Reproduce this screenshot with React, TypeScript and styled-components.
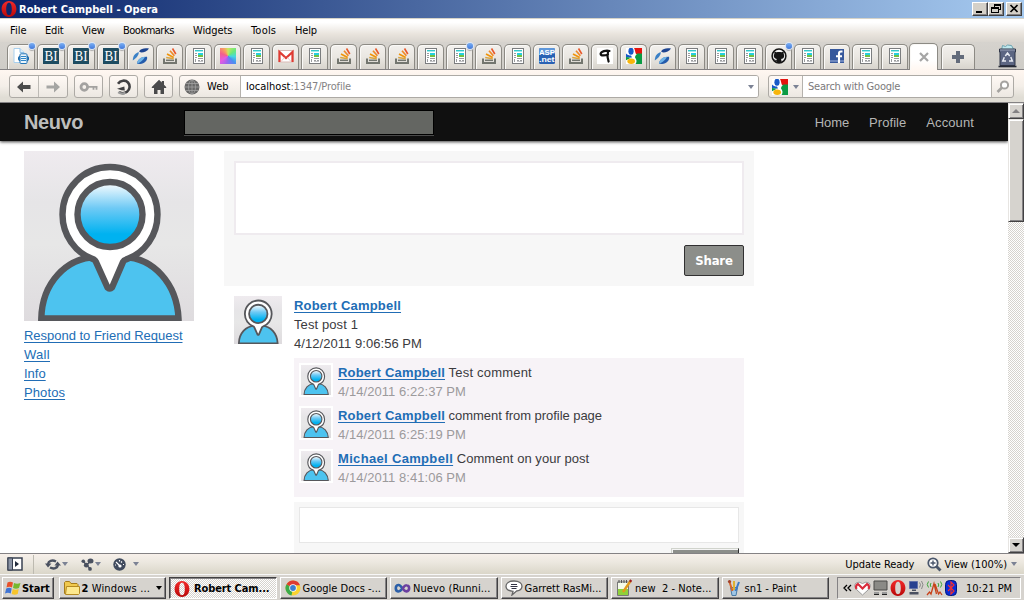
import React from "react";
import styled, { createGlobalStyle, css } from "styled-components";

const Global = createGlobalStyle`
  * { box-sizing: border-box; }
  html, body { margin: 0; padding: 0; overflow: hidden; }
  body { width: 1024px; height: 600px; background: #fff; }
  svg { display: block; flex: none; }
`;

const ui = '"DejaVu Sans Condensed", "DejaVu Sans", sans-serif';
const arial = '"Liberation Sans", Arial, sans-serif';

const Desktop = styled.div`
  width: 1024px;
  height: 600px;
  display: flex;
  flex-direction: column;
  overflow: hidden;
  font-family: ${ui};
  font-stretch: condensed;
  font-size: 11px;
  color: #000;
  white-space: nowrap;
`;

const Label = styled.span<{ $ls?: number; $color?: string; $ml?: number; $bold?: boolean }>`
  letter-spacing: ${(p) => p.$ls ?? 0}px;
  margin-left: ${(p) => p.$ml ?? 0}px;
  ${(p) => p.$color && `color: ${p.$color};`}
  font-weight: ${(p) => (p.$bold ? 700 : 400)};
  white-space: pre;
`;

/* ---------- window title ---------- */
const TitleBar = styled.header`
  height: 18px;
  flex: none;
  display: flex;
  align-items: center;
  padding: 0 2px 0 1px;
  background: linear-gradient(90deg, #0a246a, #a6caf0);
  color: #fff;
`;
const TitleButtons = styled.div`
  display: flex;
  margin-left: auto;
`;
const TitleButton = styled.div<{ $gap?: boolean }>`
  width: 16px;
  height: 14px;
  margin-left: ${(p) => (p.$gap ? 2 : 0)}px;
  background: #d4d0c8;
  border: 1px solid;
  border-color: #fff #404040 #404040 #fff;
  box-shadow: inset -1px -1px #848284;
`;

const MenuBar = styled.nav`
  height: 24px;
  flex: none;
  display: flex;
  align-items: center;
  padding-left: 10px;
  border-top: 1px solid #d6d3c8;
  background: linear-gradient(#fff, #fff 15%, #e9e4dd 65%, #d9d5cf);
`;
const MenuItem = styled.span<{ $w: number; $ls?: number }>`
  width: ${(p) => p.$w}px;
  letter-spacing: ${(p) => p.$ls ?? 0}px;
`;

/* ---------- tabs ---------- */
const TabStrip = styled.div`
  height: 28px;
  flex: none;
  display: flex;
  align-items: flex-end;
  gap: 2px;
  padding-left: 7px;
  background: linear-gradient(#d6d3ce, #ceccc7);
  border-bottom: 1px solid #848284;
`;
const Tab = styled.div<{ $w?: number }>`
  width: ${(p) => p.$w ?? 27}px;
  height: 25px;
  flex: none;
  position: relative;
  display: flex;
  justify-content: center;
  padding-top: 3px;
  border: 1px solid #8c8a84;
  border-bottom: 0;
  border-radius: 5px 5px 0 0;
  background: linear-gradient(#f2f0ed, #eae7e2 50%, #d8d4cd);
  box-shadow: inset 1px 1px #faf9f7;
`;
const ActiveTab = styled(Tab)`
  width: 29px;
  height: 27px;
  margin: 0 1px -1px -1px;
  background: linear-gradient(#fff, #fff 60%, #fff7f1);
  padding-top: 8px;
`;
const PlusTab = styled(Tab)`
  width: 34px;
  padding-top: 6px;
`;
const Dot = styled.i`
  position: absolute;
  right: -1px;
  top: -2px;
  width: 6px;
  height: 6px;
  border-radius: 50%;
  background: linear-gradient(#7bb0f5, #3f78dc);
  box-shadow: 0 0 0 1px #dce6f5, 0 2px 1px #aaa;
`;
const Trash = styled.div`
  margin: 0 7px 1px auto;
`;

/* ---------- toolbar ---------- */
const Toolbar = styled.div`
  height: 33px;
  flex: none;
  display: flex;
  align-items: flex-start;
  padding: 5px 10px 0 9px;
  background: linear-gradient(#fff7f1, #f4efe9 50%, #e0ddd5 85%);
  border-bottom: 1px solid #848284;
`;
const ToolGroup = styled.div<{ $w: number; $mr: number }>`
  width: ${(p) => p.$w}px;
  height: 23px;
  margin-right: ${(p) => p.$mr}px;
  flex: none;
  display: flex;
  border: 1px solid #adaaa5;
  border-radius: 3px;
  background: linear-gradient(#fff9f5, #ece8e2);
  overflow: hidden;
`;
const ToolCell = styled.div`
  flex: 1;
  display: flex;
  align-items: center;
  justify-content: center;
  & + & { border-left: 1px solid #bdbab5; }
`;
const SiteType = styled.div`
  width: 61px;
  display: flex;
  align-items: center;
  padding-left: 4px;
  border-right: 1px solid #b5b2ad;
`;
const Field = styled.div<{ $pl: number }>`
  flex: 1;
  display: flex;
  align-items: center;
  background: #fff;
  padding: 0 4px 0 ${(p) => p.$pl}px;
`;
const Chevron = styled.i<{ $ml?: string; $small?: boolean; $color?: string }>`
  width: 0;
  height: 0;
  flex: none;
  margin-left: ${(p) => p.$ml ?? "0"};
  border: ${(p) => (p.$small ? 3 : 3.5)}px solid transparent;
  border-top: 4px solid ${(p) => p.$color ?? "#7b8294"};
  border-bottom: 0;
`;
const Engine = styled.div`
  width: 34px;
  display: flex;
  align-items: center;
  padding-left: 3px;
  border-right: 1px solid #b5b2ad;
`;
const GoCell = styled.div`
  width: 22px;
  display: flex;
  align-items: center;
  justify-content: center;
  border-left: 1px solid #b5b2ad;
`;

/* ---------- page viewport ---------- */
const Viewport = styled.div`
  height: 450px;
  flex: none;
  display: flex;
  overflow: hidden;
`;
const Page = styled.div`
  width: 1008px;
  height: 450px;
  overflow: hidden;
  font-family: ${arial};
  font-size: 13px;
  font-stretch: normal;
  color: #3b3b3e;
  line-height: 19px;
`;
const SiteHeader = styled.header`
  height: 38px;
  display: flex;
  align-items: center;
  padding: 0 34px 0 24px;
  background: #101010;
  box-shadow: 0 1px 3px rgba(0, 0, 0, 0.75);
  position: relative;
`;
const Brand = styled.h1`
  margin: 0;
  width: 160px;
  font: 700 20px/24px ${arial};
  letter-spacing: -0.4px;
  color: #bdbebd;
`;
const SiteSearch = styled.div`
  width: 250px;
  height: 25px;
  margin-top: 1px;
  border: 1px solid #000;
  background: #646662;
  box-shadow: 0 1px #4a4a4a;
`;
const SiteNav = styled.nav`
  margin-left: auto;
  display: flex;
  gap: 20px;
  color: #b5b6b5;
  padding-top: 1px;
`;
const Columns = styled.div`
  display: flex;
  gap: 30px;
  padding: 10px 0 0 24px;
`;
const Sidebar = styled.aside`
  width: 170px;
  display: flex;
  flex-direction: column;
  align-items: flex-start;
`;
const SideLinks = styled.div`
  display: flex;
  flex-direction: column;
  align-items: flex-start;
  padding-top: 5px;
`;
const Link = styled.a<{ $bold?: boolean; $ls?: number }>`
  color: #216db5;
  text-decoration: underline;
  text-underline-offset: 2px;
  text-decoration-thickness: 1px;
  text-decoration-skip-ink: none;
  letter-spacing: ${(p) => p.$ls ?? 0}px;
  font-weight: ${(p) => (p.$bold ? 700 : 400)};
`;
const Feed = styled.main`
  width: 530px;
`;
const Composer = styled.section`
  height: 135px;
  padding: 10px;
  display: flex;
  flex-direction: column;
  align-items: flex-end;
  gap: 10px;
  background: #f7f7f7;
`;
const ComposerInput = styled.div`
  width: 510px;
  height: 74px;
  background: #fff;
  border: 2px solid #efebef;
`;
const ShareButton = styled.button`
  width: 60px;
  height: 31px;
  padding: 0;
  border: 1px solid #313031;
  border-radius: 2px;
  background: #8c8e8a;
  color: #fff;
  font: 700 13px/28px ${ui};
  font-stretch: condensed;
  letter-spacing: -0.2px;
`;
const Post = styled.article`
  display: flex;
  gap: 12px;
  padding: 10px 10px 0;
`;
const PostBody = styled.div`
  width: 450px;
  display: flex;
  flex-direction: column;
`;
const Comments = styled.div`
  height: 139px;
  margin-top: 5px;
  padding: 5px;
  display: flex;
  flex-direction: column;
  gap: 5px;
  background: #f7f3f7;
`;
const Comment = styled.div`
  height: 38px;
  display: flex;
  gap: 5px;
`;
const Thumb = styled.div`
  width: 34px;
  height: 34px;
  border: 2px solid #fff;
`;
const Stamp = styled.div`
  color: #9c9a9c;
  letter-spacing: 0.05px;
`;
const Reply = styled.div`
  height: 80px;
  flex: none;
  margin-top: 5px;
  padding: 5px;
  display: flex;
  flex-direction: column;
  align-items: flex-end;
  gap: 5px;
  background: #f7f7f7;
`;
const ReplyInput = styled.div`
  width: 440px;
  height: 36px;
  background: #fff;
  border: 1px solid #e7e7e7;
`;
const ReplyButton = styled.div`
  width: 68px;
  height: 26px;
  background: #8c8e8a;
  border: 1px solid;
  border-color: #d0d3cc #313031 #313031 #d0d3cc;
  box-shadow: inset 1px 1px #f4f4f4;
`;

/* ---------- scrollbar ---------- */
const Scrollbar = styled.div`
  width: 16px;
  height: 450px;
  display: flex;
  flex-direction: column;
  background: repeating-conic-gradient(#d6d3ce 0 25%, #fff 0 50%) 0 0 / 2px 2px;
`;
const raised = css`
  background: #d6d3ce;
  border: 1px solid;
  border-color: #e7e5e2 #424142 #424142 #e7e5e2;
  box-shadow: inset 1px 1px #fff, inset -1px -1px #848284;
`;
const ScrollButton = styled.div`
  ${raised}
  height: 16px;
  display: flex;
  align-items: center;
  justify-content: center;
`;
const ScrollThumb = styled.div`
  ${raised}
  height: 103px;
  margin-bottom: auto;
`;

/* ---------- status bar and taskbar ---------- */
const StatusBar = styled.div`
  height: 21px;
  flex: none;
  display: flex;
  align-items: center;
  padding: 0 7px;
  border-top: 1px solid #848284;
  background: linear-gradient(#f7f0ea, #ece8e0 40%, #dad6c9);
`;
const StatusRule = styled.i`
  width: 1px;
  height: 19px;
  margin: 0 11px 0 10px;
  background: #bdbab0;
`;
const StatusTool = styled.div<{ $w: number }>`
  width: ${(p) => p.$w}px;
  display: flex;
  align-items: center;
`;
const StatusRight = styled.div`
  margin-left: auto;
  display: flex;
  align-items: center;
`;
const Taskbar = styled.footer`
  height: 26px;
  flex: none;
  display: flex;
  padding: 2px 3px 2px 2px;
  border-top: 1px solid #f7f7f7;
  background: #d6d3ce;
`;
const TaskButton = styled.div<{ $w?: number; $mr?: number; $pl?: number; $active?: boolean }>`
  width: ${(p) => p.$w ?? 107.5}px;
  margin-right: ${(p) => p.$mr ?? 3}px;
  height: 22px;
  flex: none;
  display: flex;
  align-items: center;
  padding-left: ${(p) => p.$pl ?? 4}px;
  overflow: hidden;
  border: 1px solid;
  border-color: #fff #424142 #424142 #fff;
  box-shadow: inset -1px -1px #848284;
  ${(p) =>
    p.$active &&
    css`
      border-color: #424142 #fff #fff #424142;
      box-shadow: inset 1px 1px #848284;
      padding-top: 1px;
      background: repeating-conic-gradient(#d6d3ce 0 25%, #fff 0 50%) 0 0 / 2px 2px;
    `}
`;
const Tray = styled.div`
  width: 184px;
  height: 22px;
  margin-left: auto;
  display: flex;
  align-items: center;
  gap: 2px;
  padding-left: 5px;
  border: 1px solid;
  border-color: #848284 #fff #fff #848284;
`;

/* ---------- icons ---------- */
const OperaIcon = ({ s = 16 }: { s?: number }) => (
  <svg width={s} height={s} viewBox="0 0 16 16">
    <defs>
      <linearGradient id="op" x2="0" y2="1">
        <stop offset="0" stopColor="#f22a2a" />
        <stop offset="1" stopColor="#b80808" />
      </linearGradient>
    </defs>
    <path fillRule="evenodd" fill="url(#op)" d="M8 0C3.400 .3 .6 3.600 .6 8S3.400 15.700 8 16c4.600-.3 7.400-3.600 7.400-8S12.600 .3 8 0zM8 1.800c2 0 2.800 2.600 2.800 6.200S10 14.200 8 14.200 5.200 11.600 5.200 8 6 1.800 8 1.800z" />
  </svg>
);
const PageIcon = () => (
  <svg width="12" height="16" viewBox="0 0 12 16" shapeRendering="crispEdges">
    <rect x=".5" y=".5" width="11" height="15" fill="#fff" stroke="#7b7d7f" />
    <rect x="2" y="2" width="8" height="1" fill="#35c6c8" />
    <rect x="2" y="3" width="8" height="1" fill="#a0ecec" />
    <rect x="2" y="5" width="2" height="1" fill="#9a9c9e" />
    <rect x="2" y="7" width="2" height="1" fill="#9a9c9e" />
    <rect x="2" y="9" width="2" height="1" fill="#9a9c9e" />
    <rect x="2" y="11" width="1" height="3" fill="#9a9c9e" />
    <rect x="5" y="5" width="5" height="2" fill="#25cfe0" />
    <rect x="5" y="7" width="5" height="2" fill="#72c043" />
    <rect x="5" y="10" width="5" height="1" fill="#9a9c9e" />
    <rect x="5" y="12" width="2" height="1" fill="#9a9c9e" />
    <rect x="8" y="12" width="2" height="1" fill="#9a9c9e" />
    <rect x="5" y="13" width="5" height="1" fill="#c4c5c7" />
  </svg>
);
const StackIcon = () => (
  <svg width="16" height="16" viewBox="0 0 16 16" fill="none">
    <path d="M2 10.500v4.500h12v-4.500" stroke="#73766f" strokeWidth="2" />
    <path d="M4 12.300h8" stroke="#73766f" strokeWidth="1.500" />
    <path d="M4.200 9.400l7.500 1.300" stroke="#d9a441" strokeWidth="1.500" />
    <path d="M5 6l6.700 3.400" stroke="#f0940a" strokeWidth="1.700" />
    <path d="M8 2.800l4.400 5" stroke="#ef8a26" strokeWidth="1.700" />
    <path d="M10.500 .5l3.300 5.500" stroke="#e8582c" strokeWidth="1.600" />
  </svg>
);
const SwooshIcon = () => (
  <svg width="18" height="16" viewBox="0 0 18 16">
    <path fill="#1d4490" d="M7.300 3C9 .4 13 -.4 17 .5c-1.500 2.500-5 4-7.500 4C8 4.500 7 4 7.300 3z" />
    <path fill="#3b80c6" d="M.8 12.500C.8 8 3 4.800 7 4.200 6.500 7.500 4 10.500 .8 12.500z" />
    <path fill="#235bab" d="M5 15.800C5 12 9 8.300 15 8.700c1 3-2.500 7.300-7 7.300z" />
    <path fill="#6fb3e6" d="M5 15.800C5 12 9 8.500 13 8.700 12 11 8.500 14.500 5 15.800z" />
  </svg>
);
const BIcon = () => (
  <svg width="16" height="16" viewBox="0 0 16 16">
    <rect width="16" height="16" fill="#1d4c61" />
    <text x="8" y="13" textAnchor="middle" textLength="13" lengthAdjust="spacingAndGlyphs" fontFamily="Liberation Serif, serif" fontSize="14" fill="#fff">BI</text>
  </svg>
);
const DocIcon = () => (
  <svg width="16" height="16" viewBox="0 0 16 16">
    <path d="M1 .5h6l4 4v10H1z" fill="#fff" stroke="#a9d0ee" />
    <path d="M7 .5v4h4" fill="#d9ecf9" stroke="#8fc0e6" />
    <rect x="5.500" y="8" width="10" height="5" rx="2" fill="#2e86c8" stroke="#1c66a5" />
    <rect x="7" y="5.800" width="7" height="9.700" rx="1" fill="#eaf5fc" stroke="#2273b5" />
    <path d="M8 8.500h5M8 10.500h5M8 12.500h5" stroke="#2e86c8" />
  </svg>
);
const RainbowSquare = styled.div`
  width: 16px;
  height: 16px;
  background: conic-gradient(from 0deg, #c8e860, #6ce87a 50deg, #46d8e0 95deg, #4a90f0 135deg, #9a66f0 190deg, #e45ce0 235deg, #f4608a 290deg, #f8a060 330deg, #c8e860);
`;
const GmailIcon = () => (
  <svg width="16" height="16" viewBox="0 0 16 16">
    <rect x="1" y="2.500" width="14" height="11.500" fill="#fff" stroke="#d9b9b5" />
    <path d="M1.500 14V4L8 10l6.500-6v10" fill="none" stroke="#df3b33" strokeWidth="2.200" />
    <path d="M3 13.500l3.500-4M13 13.500l-3.500-4" stroke="#e9b9b5" strokeWidth=".8" />
  </svg>
);
const AspIcon = () => (
  <svg width="16" height="16" viewBox="0 0 16 16">
    <rect width="16" height="16" rx="1.500" fill="#2a62b4" />
    <rect width="16" height="6" rx="1.500" fill="#5e97da" />
    <g fill="#fff" fontFamily="Liberation Sans, sans-serif" fontWeight="700">
      <text x="0" y="6.600" fontSize="7" textLength="16" lengthAdjust="spacingAndGlyphs">ASP</text>
      <text x="0" y="14.300" fontSize="7" textLength="15.500" lengthAdjust="spacingAndGlyphs">.net</text>
    </g>
  </svg>
);
const NineIcon = () => (
  <svg width="16" height="16" viewBox="0 0 16 16">
    <rect width="16" height="16" fill="#fff" />
    <path d="M12.500 3C9 2 4 3.500 3.600 5.800c-.2 2.200 4 2 7.400.6M11 3.500c-.8 4-.6 7 .6 10" fill="none" stroke="#111" strokeWidth="2.200" strokeLinecap="round" />
  </svg>
);
const GoogleIcon = () => (
  <svg width="16" height="16" viewBox="0 0 16 16">
    <rect width="16" height="16" fill="#fff" />
    <path d="M8 0h8v6H10C9 4 9 1.500 8 0z" fill="#e5140f" />
    <path d="M16 5.500V16H9.500c2-3 .5-5-.5-6.500 0-2 1.500-2.500 2-4z" fill="#0a9b44" />
    <path d="M0 5.500C1.500 7 3 7.500 5 7.500L6 9.500H0z" fill="#1759c8" />
    <path d="M0 9l5 .7-5 2.500z" fill="#0a9b44" />
    <ellipse cx="5" cy="3.200" rx="2.600" ry="3.600" fill="#1759c8" />
    <ellipse cx="5.200" cy="13.200" rx="3.800" ry="2.700" fill="#f7b50c" />
  </svg>
);
const GithubIcon = () => (
  <svg width="16" height="16" viewBox="0 0 16 16">
    <circle cx="8" cy="8" r="6.900" fill="#f4f4f4" stroke="#151515" strokeWidth="1.500" />
    <path d="M3.500 3.500l2 .8c1.500-.5 3.500-.5 5 0l2-.8c.4 1 .3 1.800.1 2.300 1.400 2.500.3 5-2.600 5.200.4.600.5 1 .5 4h-5v-2.200c-1.500.1-2-.5-2.600-1.600 1.200.3 1.500.8 2.600.7 0-.4.100-.7.400-.9C3 10.500 2 8.200 3.400 5.800c-.2-.6-.2-1.400.100-2.300z" fill="#151515" />
  </svg>
);
const FacebookIcon = () => (
  <svg width="14" height="16" viewBox="0 0 14 16">
    <rect y="1" width="14" height="14" fill="#36589c" />
    <rect y="12" width="14" height="2" fill="#6d87bd" />
    <path d="M12.500 3.500h-1.500c-1.500 0-2 .6-2 2V15M6 8.200h6" stroke="#fff" strokeWidth="2.100" fill="none" />
  </svg>
);
const TrashIcon = () => (
  <svg width="19" height="24" viewBox="0 0 19 24">
    <path d="M3.500 6l1-4.500 3 1 2-1.500 4 .5L16 6z" fill="#bfe8ee" stroke="#6ea3b0" />
    <path d="M1.500 5h16v3H17v13.500H2V8h-.5z" fill="#5c6683" stroke="#2f3648" />
    <path d="M2 6h15" stroke="#99a2b8" />
    <path d="M.5 22.500h18" stroke="#252a36" strokeWidth="1.600" />
    <g fill="none" stroke="#e8ecf3" strokeWidth="1.500">
      <path d="M7.300 12l2.200-3 2.200 3M12.800 13l1.500 4h-3.300M8 17H4.800l1.500-3.700" />
    </g>
  </svg>
);
const BackArrow = () => (
  <svg width="16" height="14" viewBox="0 0 16 14"><path d="M1 7l6-5.500V5h7.500v4H7v3.500z" fill="#4c4c4c" /></svg>
);
const ForwardArrow = () => (
  <svg width="16" height="14" viewBox="0 0 16 14"><path d="M15 7L9 1.500V5.500H1.500v3H9v4z" fill="#a5a5a3" /></svg>
);
const KeyIcon = () => (
  <svg width="20" height="12" viewBox="0 0 20 12">
    <circle cx="5.300" cy="6" r="3.300" fill="none" stroke="#a3a2a0" strokeWidth="2.800" />
    <path d="M9 5.800h9.500M14.500 6v2.800M17.500 6v2.800" stroke="#a3a2a0" strokeWidth="1.800" />
  </svg>
);
const ReloadIcon = () => (
  <svg width="16" height="16" viewBox="0 0 16 16">
    <path d="M2 4.800C4.500 1 9.500 .8 12 3.500c2.500 2.800 2 7-1 9.300-2.200 1.600-5.500 1.700-8 .2" fill="none" stroke="#414143" strokeWidth="2.600" />
    <path d="M2.200 13.200C4 14.500 7 15 9.500 13.800" fill="none" stroke="#9c9c9c" strokeWidth="2.200" />
    <path d="M1 9.800L8.300 7.500 8.800 11.500 5.500 11.200z" fill="#414143" />
  </svg>
);
const HomeIcon = () => (
  <svg width="16" height="16" viewBox="0 0 16 16">
    <path d="M8 .8L.8 8v1H3v6h3.500v-4h3v4H13V9h2.200V8L13 5.800V2h-2.200v1.600z" fill="#4a4a4b" />
  </svg>
);
const GlobeIcon = () => (
  <svg width="16" height="16" viewBox="0 0 16 16">
    <circle cx="8" cy="8" r="7.500" fill="#686868" />
    <g fill="none" stroke="#a2a2a2" strokeWidth=".8">
      <ellipse cx="8" cy="8" rx="3.500" ry="7" />
      <path d="M8 1v14M1 8h14M2 4.500h12M2 11.500h12" />
    </g>
  </svg>
);
const SearchIcon = () => (
  <svg width="14" height="14" viewBox="0 0 14 14">
    <circle cx="8.500" cy="5" r="3.600" fill="#fff" stroke="#a5a3a0" strokeWidth="2" />
    <path d="M6 7.500L1.500 12" stroke="#a5a3a0" strokeWidth="2.600" />
  </svg>
);
const Avatar = ({ s }: { s: number }) => {
  const id = `disc${s}`;
  return (
    <svg width={s} height={s} viewBox="0 0 170 170">
      <defs>
        <linearGradient id={id} x2="0" y2="1">
          <stop offset="0" stopColor="#fff" />
          <stop offset=".4" stopColor="#6fcaf5" />
          <stop offset=".8" stopColor="#00b2f0" />
        </linearGradient>
        <linearGradient id={id + "b"} x2="0" y2="1">
          <stop offset="0" stopColor="#efebef" />
          <stop offset=".3" stopColor="#e6e5e7" />
          <stop offset=".55" stopColor="#e7e7e7" />
          <stop offset="1" stopColor="#dedbde" />
        </linearGradient>
      </defs>
      <rect width="170" height="170" fill={`url(#${id}b)`} />
      <g stroke="#56575b" strokeWidth="6.400">
        <path d="M17.300 167.500C18 132 42 107 72 106h28c29 1 53 26 54.500 61.500z" fill="#4dc3ef" />
        <path strokeLinejoin="round" d="M70 108.500C51 102 38.500 84 38.500 63.500a47.500 47.500 0 0 1 95 0C133.500 84 121 102 102 108.500Q100 109 99 111L88 136.500Q86 138.500 83.500 136.500L72 111Q71 109 70 108.500z" fill="#fff" />
        <circle cx="86" cy="63.500" r="32.500" fill={`url(#${id})`} />
      </g>
    </svg>
  );
};

const tabIcons: Record<string, () => React.ReactElement> = {
  doc: DocIcon, bi: BIcon, swoosh: SwooshIcon, stack: StackIcon, page: PageIcon,
  rainbow: () => <RainbowSquare />, gmail: GmailIcon, asp: AspIcon, nine: NineIcon,
  google: GoogleIcon, github: GithubIcon, fb: FacebookIcon,
};
/* A trailing asterisk marks a tab with unread changes. */
const tabs = "doc* bi* bi* bi* swoosh stack page rainbow page gmail page stack stack stack page page* stack page asp stack nine google swoosh page page page github* page fb page page".split(" ");

const comments = [
  { who: "Robert Campbell", nameLs: 0.2, text: "Test comment", ls: 0.2, when: "4/14/2011 6:22:37 PM" },
  { who: "Robert Campbell", nameLs: 0.2, text: "comment from profile page", ls: -0.05, when: "4/14/2011 6:25:19 PM" },
  { who: "Michael Campbell", nameLs: 0.33, text: "Comment on your post", ls: 0.05, when: "4/14/2011 8:41:06 PM" },
];

const FolderIcon = () => (
  <svg width="16" height="16" viewBox="0 0 16 16">
    <path d="M.5 13.500v-11l1-1h4l1.500 2h6l1 1v9z" fill="#f0c94e" stroke="#a67c1a" />
    <path d="M1.500 14.500l1-8h13v7l-1 1z" fill="#fde88d" stroke="#b58a22" />
  </svg>
);
const ChromeIcon = () => (
  <svg width="16" height="16" viewBox="0 0 16 16">
    <circle cx="8" cy="8" r="7.500" fill="#f9d32f" />
    <path d="M8 8L1.500 4.200A7.500 7.500 0 0 0 6.500 15.400z" fill="#3cab4a" />
    <path d="M8 8L1.500 4.200A7.500 7.500 0 0 1 15 5.200H8z" fill="#dd3c31" />
    <circle cx="8" cy="8" r="3.700" fill="#fff" />
    <circle cx="8" cy="8" r="2.900" fill="#3c7fcf" />
  </svg>
);
const InfinityIcon = () => (
  <svg width="17" height="16" viewBox="0 0 17 16" fill="none" strokeWidth="2.600">
    <path d="M8.500 8.500C6.500 5.500 5.500 4.500 4.200 5 1 5.500 1 11 4.200 11.500 6 11.700 7 10.500 8.500 8.500" stroke="#2b5fa8" />
    <path d="M8.500 8.500c1.500-2 2.500-3.500 4-3.300 3.500.3 3.500 5.800 0 6.200C11 11.500 10 10.500 8.500 8.500" stroke="#6b3fa0" />
  </svg>
);
const ChatIcon = () => (
  <svg width="18" height="16" viewBox="0 0 18 16">
    <path d="M9 1C4 1 1 3.300 1 6.200S4 11 8 11.300L7 15l4.500-4C15 10.500 17 8.500 17 6.200 17 3.300 14 1 9 1z" fill="#fff" stroke="#666" strokeWidth="1.300" />
    <path d="M6 4.500h6M5.500 6.500h7M6.500 8.500h5" stroke="#334" />
  </svg>
);
const NotepadIcon = () => (
  <svg width="17" height="18" viewBox="0 0 17 18">
    <path d="M1.500 3h11v13.500h-11z" fill="#f5fbe9" stroke="#777" />
    <path d="M2 10h10v6H2z" fill="#8fd13a" />
    <path d="M3 1v3M5.500 1v3M8 1v3M10.500 1v3" stroke="#555" />
    <path d="M7 13l7.500-11" stroke="#e29a1b" strokeWidth="2.400" />
    <path d="M14 2.800L15.200 1" stroke="#a02020" strokeWidth="2.400" />
  </svg>
);
const PaintIcon = () => (
  <svg width="14" height="18" viewBox="0 0 14 18">
    <path d="M3.500 8.500h7l-1.500 8H5z" fill="#9fc6e6" stroke="#4a7ba6" />
    <path d="M2.500 3l3 9" stroke="#d8662a" strokeWidth="2" />
    <path d="M7 2v9" stroke="#e0b030" strokeWidth="2" />
    <path d="M12 3l-3.500 9" stroke="#3c79c4" strokeWidth="2" />
    <circle cx="2.500" cy="2.500" r="1.600" fill="#a0402a" />
  </svg>
);
const StartIcon = () => (
  <svg width="16" height="14" viewBox="0 0 16 14">
    <path d="M2.500 1.500Q5 0 8 1.500L7 6.500Q4.500 5 1.500 6.500z" fill="#e8502a" />
    <path d="M9 2q3 1.500 6.500 0l-1.500 5q-3 1.500-6 0z" fill="#76b82e" />
    <path d="M1.200 7.500q3-1.500 5.500 0l-1 5Q3 11 0 12.500z" fill="#3f74d4" />
    <path d="M7.700 8q3 1.500 6 0l-1 5q-3 1.500-6 0z" fill="#f7c52c" />
  </svg>
);
const PanelIcon = () => (
  <svg width="16" height="14" viewBox="0 0 16 14">
    <rect x="1" y="1" width="14" height="12" fill="#fff" stroke="#394152" strokeWidth="1.500" />
    <path d="M1 1h4.500v12H1z" fill="#8b94a5" stroke="#394152" />
    <path d="M8 4l4 3-4 3z" fill="#222b3c" />
  </svg>
);
const SyncIcon = () => (
  <svg width="16" height="13" viewBox="0 0 16 13">
    <path d="M3 6C3.500 3 7 1.500 11 3.500M13 7c-.5 3-4 4.500-8 2.500" fill="none" stroke="#4a5160" strokeWidth="2.400" />
    <path d="M0 5.500h6.500L3 9.500zM9.500 7.500H16L12.500 3.500z" fill="#4a5160" />
  </svg>
);
const UniteIcon = () => (
  <svg width="13" height="13" viewBox="0 0 13 13">
    <path d="M2.500 3.500L5.500 7M5.500 7L10 3M5.500 7l4 4" stroke="#4a5160" strokeWidth="1.200" />
    <circle cx="2.300" cy="3.300" r="1.800" fill="#4a5160" />
    <ellipse cx="9.500" cy="3" rx="3" ry="2.500" fill="#4a5160" />
    <circle cx="5.300" cy="7.200" r="2.400" fill="#4a5160" />
    <circle cx="9" cy="10.900" r="1.900" fill="#4a5160" />
  </svg>
);
const TurboIcon = () => (
  <svg width="13" height="13" viewBox="0 0 13 13">
    <circle cx="6.500" cy="6.500" r="6.200" fill="#414b5e" />
    <path d="M3 4l4.500 4.500M6.500 2v1.500M10 6.500h1M9 3.500l-1 1M2 7h1" stroke="#fff" strokeWidth="1.200" />
    <circle cx="7" cy="8" r="1.600" fill="#fff" />
  </svg>
);
const ZoomIcon = () => (
  <svg width="15" height="15" viewBox="0 0 15 15">
    <circle cx="6" cy="6" r="4.700" fill="#fff" stroke="#4a566b" strokeWidth="1.800" />
    <path d="M3.500 6h5M6 3.500v5" stroke="#4a566b" strokeWidth="1.400" />
    <path d="M9.500 9.500l4 4" stroke="#4a566b" strokeWidth="2.800" />
  </svg>
);

export default function App() {
  return (
    <>
      <Global />
      <Desktop>
        <TitleBar>
          <OperaIcon />
          <Label $bold $ml={2} $ls={0.05}>Robert Campbell - Opera</Label>
          <TitleButtons>
            <TitleButton><svg width="14" height="12"><path d="M3 9h6" stroke="#000" strokeWidth="2" /></svg></TitleButton>
            <TitleButton>
              <svg width="14" height="12" fill="none" stroke="#000" shapeRendering="crispEdges">
                <path d="M5 2h6M5 1.500h6v5H9M5.500 1v3M2 4.500h7v5H2.500v-5M2 5h7" />
              </svg>
            </TitleButton>
            <TitleButton $gap><svg width="14" height="12"><path d="M3.500 2l7 7M10.500 2l-7 7" stroke="#000" strokeWidth="1.700" /></svg></TitleButton>
          </TitleButtons>
        </TitleBar>
        <MenuBar>
          <MenuItem $w={35}>File</MenuItem>
          <MenuItem $w={37} $ls={-0.2}>Edit</MenuItem>
          <MenuItem $w={41} $ls={-0.2}>View</MenuItem>
          <MenuItem $w={70} $ls={-0.5}>Bookmarks</MenuItem>
          <MenuItem $w={58} $ls={-0.1}>Widgets</MenuItem>
          <MenuItem $w={44} $ls={0.2}>Tools</MenuItem>
          <MenuItem $w={30} $ls={-0.2}>Help</MenuItem>
        </MenuBar>
        <TabStrip>
          {tabs.map((t, i) => {
            const Icon = tabIcons[t.replace("*", "")];
            return (
              <Tab key={i} $w={i < 4 ? 28 : 27}>
                <Icon />
                {t.endsWith("*") && <Dot />}
              </Tab>
            );
          })}
          <ActiveTab>
            <svg width="10" height="10" viewBox="0 0 10 10"><path d="M1 1l8 8M9 1L1 9" stroke="#a5a5a5" strokeWidth="2.200" /></svg>
          </ActiveTab>
          <PlusTab>
            <svg width="12" height="12" viewBox="0 0 12 12"><path d="M6 0v12M0 6h12" stroke="#636b7b" strokeWidth="4" /></svg>
          </PlusTab>
          <Trash><TrashIcon /></Trash>
        </TabStrip>
        <Toolbar>
          <ToolGroup $w={59} $mr={6}>
            <ToolCell><BackArrow /></ToolCell>
            <ToolCell><ForwardArrow /></ToolCell>
          </ToolGroup>
          <ToolGroup $w={29} $mr={6}><ToolCell><KeyIcon /></ToolCell></ToolGroup>
          <ToolGroup $w={29} $mr={6}><ToolCell><ReloadIcon /></ToolCell></ToolGroup>
          <ToolGroup $w={29} $mr={6}><ToolCell><HomeIcon /></ToolCell></ToolGroup>
          <ToolGroup $w={580} $mr={9}>
            <SiteType><GlobeIcon /><Label $ml={7}>Web</Label></SiteType>
            <Field $pl={5}>
              <Label>localhost</Label>
              <Label $color="#848284" $ls={-0.15}>:1347/Profile</Label>
              <Chevron $ml="auto" />
            </Field>
          </ToolGroup>
          <ToolGroup $w={246} $mr={0}>
            <Engine><GoogleIcon /><Chevron $ml="5px" /></Engine>
            <Field $pl={5}><Label $color="#7b797b" $ls={-0.22}>Search with Google</Label></Field>
            <GoCell><SearchIcon /></GoCell>
          </ToolGroup>
        </Toolbar>

        <Viewport>
          <Page>
            <SiteHeader>
              <Brand>Neuvo</Brand>
              <SiteSearch />
              <SiteNav>
                <Label $ls={-0.1}>Home</Label>
                <Label $ls={0.05}>Profile</Label>
                <Label $ls={0.1}>Account</Label>
              </SiteNav>
            </SiteHeader>
            <Columns>
              <Sidebar>
                <Avatar s={170} />
                <SideLinks>
                  <Link $ls={-0.02}>Respond to Friend Request</Link>
                  <Link $ls={0.3}>Wall</Link>
                  <Link>Info</Link>
                  <Link $ls={0.1}>Photos</Link>
                </SideLinks>
              </Sidebar>
              <Feed>
                <Composer>
                  <ComposerInput />
                  <ShareButton>Share</ShareButton>
                </Composer>
                <Post>
                  <Avatar s={48} />
                  <PostBody>
                    <div><Link $bold $ls={0.2}>Robert Campbell</Link></div>
                    <Label $ls={0.1}>Test post 1</Label>
                    <Label $ls={0.05}>4/12/2011 9:06:56 PM</Label>
                    <Comments>
                      {comments.map((c) => (
                        <Comment key={c.when}>
                          <Thumb><Avatar s={30} /></Thumb>
                          <div>
                            <Link $bold $ls={c.nameLs}>{c.who}</Link>
                            <Label $ls={c.ls}> {c.text}</Label>
                            <Stamp>{c.when}</Stamp>
                          </div>
                        </Comment>
                      ))}
                    </Comments>
                    <Reply>
                      <ReplyInput />
                      <ReplyButton />
                    </Reply>
                  </PostBody>
                </Post>
              </Feed>
            </Columns>
          </Page>
          <Scrollbar>
            <ScrollButton><svg width="8" height="4"><path d="M0 4h8L4 0z" fill="#848284" /></svg></ScrollButton>
            <ScrollThumb />
            <ScrollButton><svg width="8" height="4"><path d="M0 0h8L4 4z" fill="#000" /></svg></ScrollButton>
          </Scrollbar>
        </Viewport>

        <StatusBar>
          <PanelIcon />
          <StatusRule />
          <StatusTool $w={36}><SyncIcon /><Chevron $ml="1px" /></StatusTool>
          <StatusTool $w={32}><UniteIcon /><Chevron $ml="1px" /></StatusTool>
          <StatusTool $w={30}><TurboIcon /><Chevron $ml="7px" /></StatusTool>
          <StatusRight>
            <Label $ls={-0.05}>Update Ready</Label>
            <Label $ml={13} />
            <ZoomIcon />
            <Label $ml={2}>View (100%)</Label>
            <Chevron $ml="4px" />
          </StatusRight>
        </StatusBar>

        <Taskbar>
          <TaskButton $w={52} $mr={4.5} $pl={2}><StartIcon /><Label $bold $ml={1} $ls={-0.1}>Start</Label></TaskButton>
          <TaskButton><FolderIcon /><Label $bold $ml={2}>2</Label><Label $ls={0.15}> Windows ...</Label><Chevron $small $color="#000" $ml="6px" /></TaskButton>
          <TaskButton $active><OperaIcon /><Label $bold $ml={4} $ls={-0.1}>Robert Cam...</Label></TaskButton>
          <TaskButton><ChromeIcon /><Label $ml={2}>Google Docs -...</Label></TaskButton>
          <TaskButton $pl={3}><InfinityIcon /><Label $ml={2} $ls={0.1}>Nuevo (Runni...</Label></TaskButton>
          <TaskButton $pl={3}><ChatIcon /><Label $ml={2}>Garrett RasMi...</Label></TaskButton>
          <TaskButton><NotepadIcon /><Label $ml={2} $ls={0.05}>new  2 - Note...</Label></TaskButton>
          <TaskButton><PaintIcon /><Label $ml={4}>sn1 - Paint</Label></TaskButton>
          <Tray>
            <svg width="9" height="8" viewBox="0 0 9 8" fill="none" stroke="#000" strokeWidth="1.300"><path d="M4 1L1 4l3 3M8 1L5 4l3 3" /></svg>
            <svg width="17" height="15" viewBox="0 0 17 15">
              <path d="M2 2Q5 0 8.500 2.500 12 0 15 2q3 3-1 7l-5.500 5L3 9Q-1 5 2 2z" fill="#fff" stroke="#999" />
              <path d="M2.500 8Q1 4.500 4 3l4.500 4.500L13 3q3 1.500 1.500 5" fill="none" stroke="#d92b3b" strokeWidth="2.200" />
            </svg>
            <svg width="15" height="16" viewBox="0 0 15 16"><path d="M1 1h13v9H1z" fill="#8a8a86" stroke="#4a4a48" /><path d="M1 12h5v2H1zM9 12h5v2H9z" fill="#999" /><path d="M1 14.500h5M9 14.500h5" stroke="#222" /></svg>
            <OperaIcon />
            <svg width="16" height="16" viewBox="0 0 16 16">
              <path d="M1.500 1.500h8v7h-8z" fill="#27408f" stroke="#6070a8" /><path d="M4 9.500h4v1.500H4zM1.500 12h9v2.500h-9z" fill="#4a5060" />
              <path d="M11.500 2.500q2 2 0 5M13.500 1q3 3.500 0 8" stroke="#888" fill="none" />
            </svg>
            <svg width="17" height="16" viewBox="0 0 17 16" fill="none">
              <path d="M1 15l2.500-3L5 14 8 3.500 10.500 14M9 4l3.500 10 1.500-2 2 3" stroke="#c8421a" strokeWidth="1.300" />
              <path d="M2.500 1.500q-2.500 3 0 6M5 3q-1.500 2 0 4M14.500 1.500q2.500 3 0 6M12 3q1.500 2 0 4" stroke="#3aa83a" />
            </svg>
            <svg width="12" height="16" viewBox="0 0 12 16">
              <rect x=".5" y=".5" width="11" height="15" rx="4" fill="#0a2bd6" stroke="#001a80" />
              <path d="M3 5l6 6-3 3V2l3 3-6 6" fill="none" stroke="#f03030" strokeWidth="1.200" />
            </svg>
            <Label $ml={7}>10:21 PM</Label>
          </Tray>
        </Taskbar>
      </Desktop>
    </>
  );
}
